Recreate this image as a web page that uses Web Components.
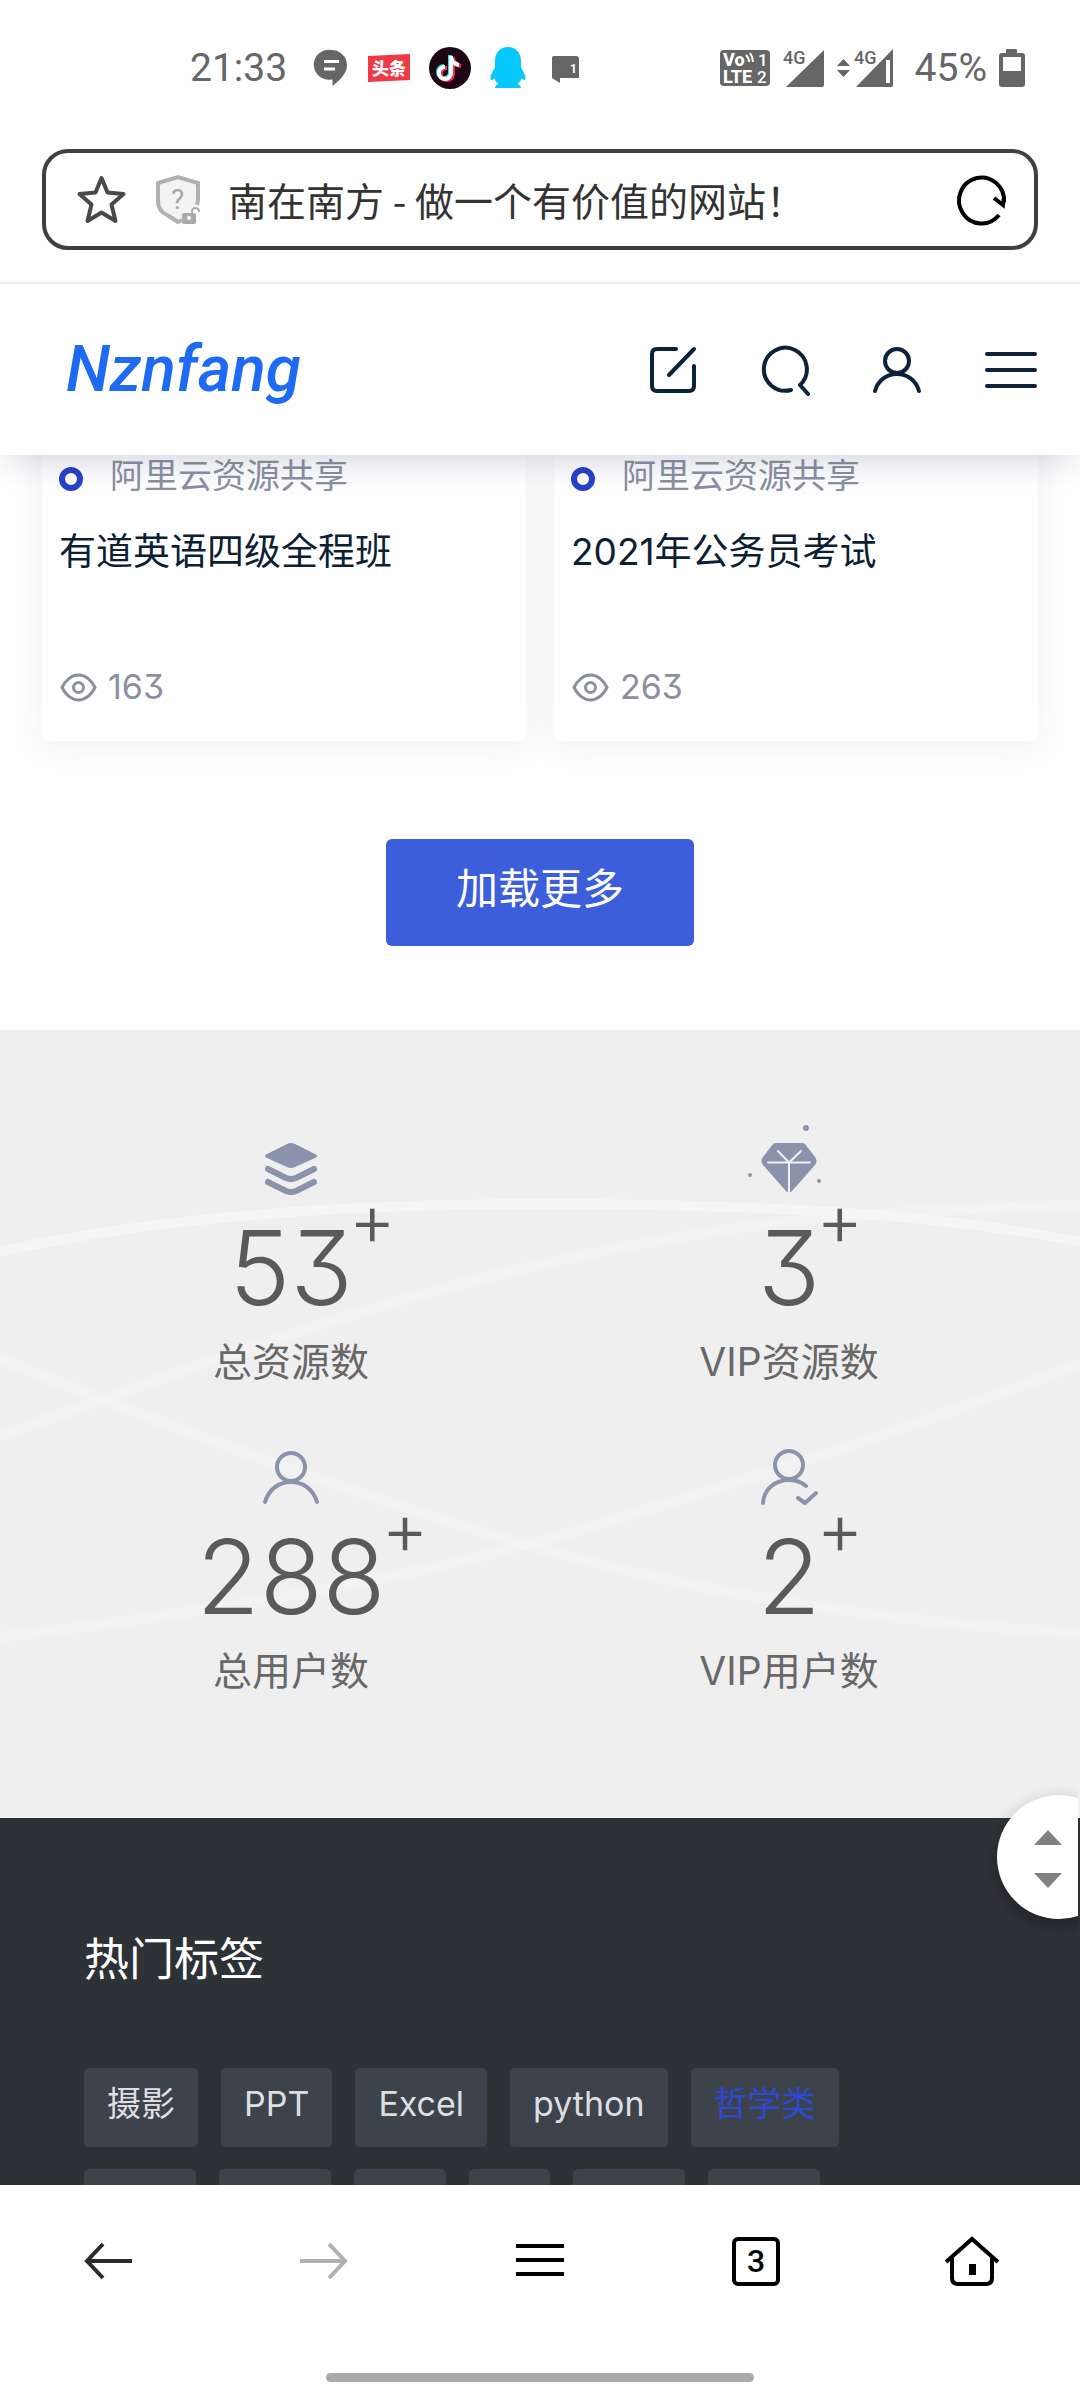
<!DOCTYPE html>
<html lang="zh-CN">
<head>
<meta charset="utf-8">
<meta name="viewport" content="width=device-width, initial-scale=1">
<title>南在南方 - 做一个有价值的网站！</title>
<style>
html,body{margin:0;height:100%}
body{background:#fefefe;font-family:Inter,"Noto Sans CJK SC",sans-serif;color:#0b2033}
</style>
</head>
<body>
<browser-shell>
  <phone-status slot="status"></phone-status>
  <address-bar slot="address" page-title="南在南方 - 做一个有价值的网站！"></address-bar>
  <site-page>
    <resource-card slot="cards" views="163"><span slot="source">阿里云资源共享</span>有道英语四级全程班</resource-card>
    <resource-card slot="cards" views="263"><span slot="source">阿里云资源共享</span>2021年公务员考试</resource-card>
    <stat-item slot="stats" icon="layers" count="53">总资源数</stat-item>
    <stat-item slot="stats" icon="diamond" count="3">VIP资源数</stat-item>
    <stat-item slot="stats" icon="user" count="288">总用户数</stat-item>
    <stat-item slot="stats" icon="member" count="2">VIP用户数</stat-item>
    <tag-link slot="tags">摄影</tag-link>
    <tag-link slot="tags">PPT</tag-link>
    <tag-link slot="tags">Excel</tag-link>
    <tag-link slot="tags">python</tag-link>
    <tag-link slot="tags" current>哲学类</tag-link>
  </site-page>
  <scroll-knob slot="knob"></scroll-knob>
  <bottom-nav slot="nav"></bottom-nav>
</browser-shell>

<script>
const define = (name, render) => customElements.define(name, class extends HTMLElement {
  connectedCallback() {
    if (this.shadowRoot) return;
    this.attachShadow({ mode: 'open' }).innerHTML =
      `<style>*{box-sizing:border-box}svg{display:block;overflow:visible}button,a{font:inherit;color:inherit;text-decoration:none}button{display:block;margin:0;padding:0;border:0;background:none}</style>` + render(this);
  }
});

define('browser-shell', () => `
<style>
:host{display:flex;flex-direction:column;height:100vh;background:#fefefe}
.view{position:relative;flex:1;min-height:0;overflow:hidden}
</style>
<slot name="status"></slot>
<slot name="address"></slot>
<main class="view"><slot></slot><slot name="knob"></slot></main>
<slot name="nav"></slot>`);

define('phone-status', () => `
<style>
:host{display:flex;justify-content:space-between;align-items:center;height:136px;padding:0 55px 0 190px;color:#666;font-family:Roboto,sans-serif}
div{display:flex;align-items:center}
.big{font-size:39px;font-weight:400;line-height:48px}
.apps{gap:19px}
.apps .big{margin-right:10px}
.signal{gap:12px}
.signal .big{padding-left:9px}
text{font-family:Roboto,"Noto Sans CJK SC",sans-serif}
</style>
<div class="apps">
  <span class="big">21:33</span>
  <svg width="33" height="42" viewBox="0 0 33 42"><path d="M15.500 3a15.500 15 0 0 1 15.500 15c0 8-6 14-14.500 21v-6.500h-1A15 15 0 1 1 15.500 3z" fill="#666"/><path d="M8 14.500h15M8 22h11" stroke="#fff" stroke-width="3"/></svg>
  <svg width="42" height="42" viewBox="0 0 42 42"><path d="M0 9 42 7V33L0 35z" fill="#ee3a45"/><text x="4" y="28" font-size="17" font-weight="900" fill="#fff">头条</text></svg>
  <svg width="42" height="42" viewBox="0 0 42 42"><circle cx="21" cy="21" r="21" fill="#1d0715"/><g fill="none" stroke-width="4"><path d="M22 9v17a6 6 0 1 1-6-6M22 10q1 7 8 8" stroke="#25e0dc" transform="translate(-1 -1)"/><path d="M22 9v17a6 6 0 1 1-6-6M22 10q1 7 8 8" stroke="#f22b56" transform="translate(2 1)"/><path d="M22 9v17a6 6 0 1 1-6-6M22 10q1 7 8 8" stroke="#fff"/></g></svg>
  <svg width="36" height="42" viewBox="0 0 36 42"><path d="M18 0c8 0 13 6 13 14v6c2 4 5 9 4.500 12-.5 2-2 1-4-1-.5 3-2 4.500-4 6 2 1 3.500 2 3.500 4H5c0-2 1.500-3 3.500-4-2-1.500-3.500-3-4-6-2 2-3.500 3-4 1C0 29 3 24 5 20v-6C5 6 10 0 18 0z" fill="#06c8fa"/></svg>
  <svg width="42" height="42" viewBox="0 0 42 42"><path d="M9 9h22q3 0 3 3v19H15v5l-8-5V11q0-2 2-2z" fill="#666"/><text x="25" y="26" font-size="12" font-weight="700" fill="#fff">1</text></svg>
</div>
<div class="signal">
  <svg width="50" height="38" viewBox="0 0 50 38"><rect y="1" width="50" height="36" rx="4" fill="#666"/><g fill="#fff" font-weight="800"><text x="3" y="17" font-size="18">Vo</text><text x="38" y="17" font-size="17" font-weight="500">1</text><text x="3" y="34" font-size="18">LTE</text><text x="37" y="34" font-size="17" font-weight="500">2</text></g><path d="M26 6q3 3 3 7M30 4q3 4 3 9" fill="none" stroke="#fff" stroke-width="2"/></svg>
  <svg width="43" height="38" viewBox="0 0 43 38"><path d="M42 1v35q0 2-2 2H4z" fill="#666"/><text x="1" y="15" font-size="18" font-weight="500" fill="#666">4G</text></svg>
  <svg width="57" height="38" viewBox="0 0 57 38"><path d="M0 17 6.500 10 13 17zM0 21h13l-6.500 7zM56 0v36q0 2-2 2H19z" fill="#666"/><path d="M51 11v23" stroke="#fff" stroke-width="4"/><text x="17" y="15" font-size="18" font-weight="500" fill="#666">4G</text></svg>
  <span class="big">45%</span>
  <svg width="26" height="38" viewBox="0 0 26 38"><path d="M7 1q0-1 1-1h9q1 0 1 1v3h5q3 0 3 3v28q0 3-3 3H3q-3 0-3-3V7q0-3 3-3h4z" fill="#666"/><path d="M4 8h18v14H4z" fill="#fff"/></svg>
</div>`);

define('address-bar', el => `
<style>
:host{display:block;padding:13px 42px 32px;border-bottom:2px solid #ededed}
form{display:flex;align-items:center;height:101px;margin:0;padding:0 28px 0 30px;border:4px solid #404040;border-radius:26px}
input{flex:1;min-width:0;margin:0 20px 0 27px;padding:0 0 2px;border:0;outline:0;background:none;color:#333;font:400 39px/56px "Noto Sans CJK SC",sans-serif}
.shield{margin-left:29px}
.shield text{font:28px Roboto,sans-serif}
</style>
<form>
  <button type="button" aria-label="收藏"><svg width="51" height="51" viewBox="0 0 51 51"><path d="M25.500 4 31.500 18.500 47.500 20 35.500 30.500 39.500 47 25.500 38.500 11.500 47 15.500 30.500 3.500 20 19.500 18.500z" fill="none" stroke="#484848" stroke-width="4" stroke-linejoin="round"/></svg></button>
  <button type="button" class="shield" aria-label="网站安全"><svg width="45" height="51" viewBox="0 0 45 51"><path d="M41 31Q42 28 42 24V9Q32 6 22 3 12 6 2 9v18q0 10 9 14 5 3 11 7l4-2" fill="#f3f3f3" stroke="#b0b0b0" stroke-width="4"/><text x="15" y="35" fill="#a5a5a5">?</text><rect x="26" y="39" width="14" height="11" rx="2" fill="#aaa"/><path d="M36 39v-1q0-4 3.500-4t3.500 4" fill="none" stroke="#aaa" stroke-width="2"/><circle cx="33" cy="44" r="2" fill="#fff"/></svg></button>
  <input type="text" aria-label="地址" value="${el.getAttribute('page-title')}">
  <button type="button" aria-label="刷新"><svg width="48" height="50" viewBox="0 0 48 50"><path d="M41 40A22.500 23 0 1 1 46 27" fill="none" stroke="#000" stroke-width="4"/><path d="M36 23l9 7 1-8" fill="none" stroke="#000" stroke-width="4"/></svg></button>
</form>`);

define('site-header', () => `
<style>
:host{position:relative;z-index:1;display:flex;align-items:center;justify-content:space-between;height:171px;padding:0 43px 0 66px;background:#fefefe;box-shadow:0 14px 32px -10px rgba(30,50,90,.22);color:#0b2239}
.logo{font:italic 500 64px/80px Roboto,sans-serif;color:#1f6af2}
nav{display:flex;align-items:center;gap:64px}
path,circle{fill:none;stroke:currentColor;stroke-width:4;stroke-linecap:round;stroke-linejoin:round}
</style>
<a class="logo" href="#">Nznfang</a>
<nav>
  <button aria-label="投稿"><svg width="48" height="48" viewBox="0 0 48 48"><path d="M27 3H8Q3 3 3 8v32q0 5 5 5h32q5 0 5-5V20M45 3 20 29"/></svg></button>
  <button aria-label="搜索"><svg width="48" height="48" viewBox="0 0 48 48"><path d="M30 44a21.500 21.500 0 1 1 9-5l8 9"/></svg></button>
  <button aria-label="用户"><svg width="48" height="48" viewBox="0 0 48 48"><circle cx="24" cy="15" r="12"/><path d="M2 45C5 34 14 28 24 28s19 6 22 17"/></svg></button>
  <button aria-label="菜单"><svg width="52" height="48" viewBox="0 0 52 48"><path d="M2 8h48M2 24h48M2 40h48"/></svg></button>
</nav>`);

define('resource-card', el => `
<style>
:host{display:block;flex:1;padding:0 17px 33px;background:#fefefe;border-radius:0 0 8px 8px;box-shadow:0 4px 36px rgba(0,0,0,.06)}
.source{display:flex;align-items:center;gap:27px;font-size:34px;line-height:42px;color:#8a90a2}
.source i{width:24px;height:24px;border:6px solid #2a43c6;border-radius:50%;background:#fff;margin-top:6px}
h3{margin:29px 0 0;font-size:37px;line-height:52px;font-weight:400;color:#0b2033}
.views{display:flex;align-items:center;gap:11px;margin-top:88px;font-size:34px;line-height:42px;color:#8c909d;font-feature-settings:"cv09"}
.views svg{margin-left:1px}
</style>
<div class="source"><i></i><slot name="source"></slot></div>
<h3><slot></slot></h3>
<div class="views"><svg width="37" height="29" viewBox="0 0 37 29"><g fill="none" stroke="currentColor" stroke-width="3"><path d="M2 14.500C5 8 11 2 18.500 2S32 8 35 14.500C32 21 26 27 18.500 27S5 21 2 14.500z"/><circle cx="18.500" cy="14.500" r="5"/></g></svg><span>${el.getAttribute('views')}</span></div>`);

const statIcons = {
  layers: `<g fill="currentColor"><path d="M28 7q4-2 8 0l20 10q4 2 0 4L36 30q-4 2-8 0L8 21q-4-2 0-4z"/></g><g fill="none" stroke="currentColor" stroke-width="6" stroke-linecap="round" stroke-linejoin="round"><path d="M9 32l18 9q5 2 10 0l18-9M9 45l18 9q5 2 10 0l18-9"/></g>`,
  diamond: `<path d="M19 6h26q2 0 3 1l10 13q3 4 0 8L35 54q-3 3-6 0L6 28q-3-4 0-8L16 7q1-1 3-1z" fill="currentColor"/><path d="M11 25.500h42M32 25.500v32M32 25.500 21 14M32 25.500 44 14" stroke="#eef1fa" stroke-width="2" stroke-linecap="round"/><g fill="currentColor"><circle cx="49" cy="-9" r="3"/><circle cx="-7" cy="38" r="2"/><circle cx="62" cy="44" r="2"/></g>`,
  user: `<g fill="none" stroke="currentColor" stroke-width="4" stroke-linecap="round"><circle cx="32" cy="21" r="14"/><path d="M6 56C10 43 20 36 32 36s22 7 26 20"/></g>`,
  member: `<g fill="none" stroke="currentColor" stroke-width="4" stroke-linecap="round" stroke-linejoin="round"><circle cx="32" cy="19" r="14"/><path d="M6 57C7 43 18 34 32 34q10 0 17 6M41 52l7 5 11-10"/></g>`
};

define('stat-item', el => `
<style>
:host{display:flex;flex-direction:column;align-items:center;color:#5a5a5a}
svg{color:#8a93ab}
strong{position:relative;margin-top:17px;font-size:103px;line-height:100px;font-weight:350;font-feature-settings:"cv09"}
sup{position:absolute;left:100%;top:0;margin-left:-4px;font-size:72px;line-height:2px}
span{margin-top:16px;font-size:39px;line-height:56px;color:#686868}
</style>
<svg width="64" height="64" viewBox="0 0 64 64">${statIcons[el.getAttribute('icon')]}</svg>
<strong>${el.getAttribute('count')}<sup>+</sup></strong>
<span><slot></slot></span>`);

define('tag-link', () => `
<style>
:host{display:block;padding:11px 23px 18px;background:#3d434a;border-radius:5px;font-size:34px;line-height:50px;color:#dcdee2}
:host([current]){color:#2d49d2}
</style>
<a href="#"><slot></slot></a>`);

define('site-page', () => `
<style>
:host{display:block}
.cards{display:flex;gap:28px;padding:0 42px}
.more{display:flex;justify-content:center;padding:98px 0 84px}
.more button{padding:22px 70px 29px;border-radius:6px;background:#3d5edb;color:#fff;font-size:42px;line-height:56px}
.stats{position:relative;display:grid;grid-template-columns:1fr 1fr;row-gap:56px;padding:107px 42px 119px;background:#efefef;overflow:hidden}
.lines{position:absolute;inset:0;width:100%;height:100%}
::slotted(stat-item){position:relative}
footer{padding:112px 84px 0;background:#2d3237}
h2{margin:0 0 78px;font-size:45px;line-height:60px;font-weight:400;color:#fff}
.tags{display:flex;flex-wrap:wrap;gap:23px}
.next{display:flex;gap:23px;margin-top:22px}
.next i{height:79px;width:112px;border-radius:5px;background:#3d434a}
.next .short{width:92px}
.next .mini{width:81px}
</style>
<site-header></site-header>
<section class="cards"><slot name="cards"></slot></section>
<div class="more"><button>加载更多</button></div>
<section class="stats">
  <svg class="lines" viewBox="0 0 1080 788" preserveAspectRatio="none" fill="none" stroke="#fff"><g stroke-opacity=".4" stroke-width="10"><path d="M-10 224C160 185 360 174 540 174S930 180 1090 214"/></g><g stroke-opacity=".18" stroke-width="11"><path d="M-10 410C150 352 330 285 500 244S820 178 1090 176"/><path d="M-10 325C140 385 260 430 400 476S750 585 1090 604"/><path d="M-10 608C240 580 450 540 600 494S880 410 1090 330"/></g></svg>
  <slot name="stats"></slot>
</section>
<footer>
  <h2>热门标签</h2>
  <div class="tags"><slot name="tags"></slot></div>
  <div class="next" aria-hidden="true"><i></i><i></i><i class="short"></i><i class="mini"></i><i></i><i></i></div>
</footer>`);

define('scroll-knob', () => `
<style>
:host{position:absolute;right:2px;bottom:266px;width:81px;height:124px;clip-path:inset(-30px 0 -30px -30px)}
div{display:flex;flex-direction:column;justify-content:center;gap:28px;width:124px;height:124px;padding:3px 0 0 37px;border-radius:50%;background:#fff;box-shadow:0 6px 16px rgba(0,0,0,.3)}
path{fill:#808080}
</style>
<div>
<button aria-label="回到顶部"><svg width="28" height="15" viewBox="0 0 28 15"><path d="M0 15 14 0 28 15z"/></svg></button>
<button aria-label="滚到底部"><svg width="28" height="15" viewBox="0 0 28 15"><path d="M0 0h28L14 15z"/></svg></button>
</div>`);

define('bottom-nav', () => `
<style>
:host{display:block;height:215px;background:#fff;color:#000}
nav{display:grid;grid-template-columns:repeat(5,1fr);height:152px}
button{display:grid;place-items:center}
path{fill:none;stroke:currentColor;stroke-width:4}
.back{color:#2a2a2a}
.next{color:#b1b1b1}
.tabs span{width:48px;height:49px;border:4px solid #000;border-radius:6px;font:500 32px/40px Roboto,sans-serif;text-align:center}
.pill{width:428px;height:9px;margin:36px auto 0;border-radius:5px;background:#a9a9a9}
</style>
<nav>
  <button class="back" aria-label="后退"><svg width="48" height="48" viewBox="0 0 48 48"><path d="M48 24H3M19 7 3 24l16 17"/></svg></button>
  <button class="next" aria-label="前进"><svg width="48" height="48" viewBox="0 0 48 48"><path d="M0 24h45M29 7l16 17-16 17"/></svg></button>
  <button aria-label="菜单"><svg width="48" height="48" viewBox="0 0 48 48"><path d="M0 9h48M0 23h48M0 37h48"/></svg></button>
  <button class="tabs" aria-label="标签页"><span>3</span></button>
  <button aria-label="主页"><svg width="54" height="50" viewBox="0 0 54 50"><path d="M1 26 27 3l26 23M7 22v20q0 6 6 6h28q6 0 6-6V22"/><path d="M24 28h7v11h-7z" style="fill:#000;stroke:none"/></svg></button>
</nav>
<div class="pill"></div>`);
</script>
</body>
</html>
